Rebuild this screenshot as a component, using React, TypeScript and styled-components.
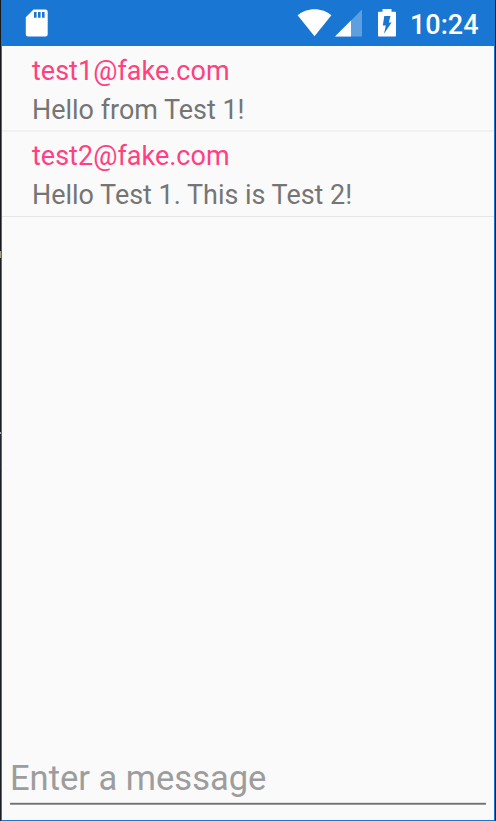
import React from "react";
import styled, { createGlobalStyle } from "styled-components";

const GlobalStyle = createGlobalStyle`
  * { box-sizing: border-box; }
  body { margin: 0; font-family: Roboto, sans-serif; background: #16181c; }
`;

const Backdrop = styled.div`
  display: flex;
  height: 821px;
  padding: 0 1px;
  background: linear-gradient(#16181c 0 251px, #a29c80 251px 258px, #1c1f24 258px 432px, #a8a8a8 432px 434px, #1f2430 434px 470px, #1b1f27 470px);
  background-size: 1px 100%;
  background-repeat: no-repeat;
`;

const Screen = styled.main`
  flex: 1;
  display: flex;
  flex-direction: column;
  border: 1px solid #1976d2;
  border-top: 0;
  background: #fafafa;
`;

const StatusBar = styled.header`
  flex: 0 0 46px;
  display: flex;
  align-items: flex-start;
  padding: 9px 15px 0 23px;
  background: #1976d2;
  color: #fff;
`;

const Glyph = styled.svg<{ $gap?: number }>`
  flex: none;
  display: block;
  margin-right: ${(p) => p.$gap ?? 0}px;
`;

const Spacer = styled.div`
  flex: 1;
`;

const Clock = styled.time`
  width: 69px;
  font-size: 27px;
  line-height: 32px;
  font-weight: 500;
  white-space: nowrap;
`;

const Messages = styled.ul`
  flex: 1;
  margin: 0;
  padding: 0;
  list-style: none;
`;

const Message = styled.li`
  height: 85px;
  padding: 5px 0 0 30px;
  border-bottom: 1px solid #e6e6e6;
  font-size: 26.95px;
  line-height: 39px;
  white-space: nowrap;

  &:first-child {
    height: 86px;
    padding-top: 6px;
    border-bottom: 2px solid #f1f1f1;
  }
`;

const Sender = styled.div`
  color: #ff4081;
  letter-spacing: 0.04px;
`;

const Body = styled.div`
  color: #757575;
`;

const Composer = styled.form`
  height: 65px;
  margin: 0 8px;
`;

const Input = styled.input`
  display: block;
  width: 100%;
  height: 50px;
  padding: 0 0 5px;
  border: 0;
  outline: 0;
  background: linear-gradient(#e0e0e0 0 1px, #717171 1px 2px, #9a9a9a 2px 3px) bottom / 100% 3px no-repeat;
  font: 34.5px Roboto, sans-serif;
  color: #212121;
  &::placeholder { color: #9d9d9d; opacity: 1; }
`;

const messages = [
  { from: "test1@fake.com", text: "Hello from Test 1!" },
  { from: "test2@fake.com", text: "Hello Test 1. This is Test 2!" },
];

export default function App() {
  return (
    <>
      <GlobalStyle />
      <Backdrop>
        <Screen>
          <StatusBar>
            <Glyph width="23" height="28" viewBox="0 0 23 28" fill="#fff">
              <path fillRule="evenodd" d="M8.5.5h12a2.200 2.200 0 0 1 2.200 2.200v22.600a2.200 2.200 0 0 1-2.200 2.200H3a2.200 2.200 0 0 1-2.200-2.200V8.200zM9 3v5.700h2.600V3zM13 3v5.700h2.600V3zM17 3v5.700h2.600V3z" />
            </Glyph>
            <Spacer />
            <Glyph $gap={3} width="35" height="28" viewBox="0 0 35 28" fill="#fff">
              <path d="M17.500 27.300.6 6.200C5 2.500 11 .2 17.500.2S30 2.500 34.400 6.200z" />
            </Glyph>
            <Glyph $gap={16} width="27" height="28" viewBox="0 0 27 28" fill="#fff">
              <path d="M0 27.500 27 .5v27z" opacity=".3" />
              <path d="M0 27.500 16 11.500v16z" />
            </Glyph>
            <Glyph $gap={14} width="18" height="28" viewBox="0 0 18 28" fill="#fff">
              <path fillRule="evenodd" d="M4.500 0h9v2.700h3.700A.8.8 0 0 1 18 3.500v23.300a.8.8 0 0 1-.8.8H.8a.8.8 0 0 1-.8-.8V3.500a.8.8 0 0 1 .8-.8h3.700zM6.300 7h6.200l-1.700 6.500h2.700L6 24.700l1.800-8.200H4.800z" />
            </Glyph>
            <Clock>10:24</Clock>
          </StatusBar>
          <Messages>
            {messages.map((m) => (
              <Message key={m.from}>
                <Sender>{m.from}</Sender>
                <Body>{m.text}</Body>
              </Message>
            ))}
          </Messages>
          <Composer>
            <Input placeholder="Enter a message" />
          </Composer>
        </Screen>
      </Backdrop>
    </>
  );
}
